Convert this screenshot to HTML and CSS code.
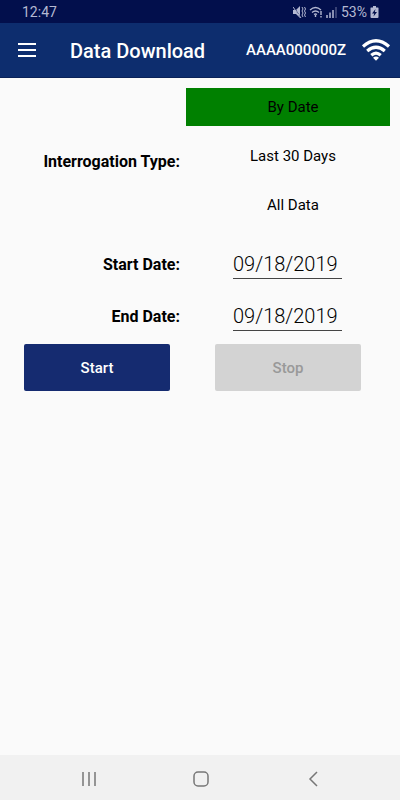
FILE: index.html
```html
<!DOCTYPE html>
<html lang="en">
<head>
    <meta charset="UTF-8">
    <meta name="viewport" content="width=device-width, initial-scale=1.0">
    <title>Data Download</title>
    <link rel="stylesheet" href="styles.css">
</head>
<body>
    <div class="status-bar">
        <span class="clock">12:47</span>
        <div class="status-icons">
            <svg width="13" height="14" viewBox="0 0 13 14">
                <path d="M0 5h3l4-4v12l-4-4H0z" fill="currentColor"/>
                <path d="M0 1l8 12" stroke="#020f4c" stroke-width="1"/>
                <path d="M0 2l8 11" stroke="currentColor" stroke-width="1"/>
                <path d="M9 2l1 2-1 2 1 2-1 2 1 2M11.500 2l1 2-1 2 1 2-1 2 1 2" fill="none" stroke="currentColor"/>
            </svg>
            <svg width="14" height="12" viewBox="0 0 14 12">
                <path d="M1 4q5.500-5 11 0M3 6.500q3.500-3 7 0M5 8.500q1.500-1 3 0" fill="none" stroke="currentColor" stroke-width="1.300"/>
                <path d="M6.500 9v2M12 5v4M12 10v1.500" stroke="currentColor" stroke-width="1.400"/>
            </svg>
            <svg width="12" height="12" viewBox="0 0 12 12">
                <path d="M1 9v3M4 6.500V12M7 4v8" stroke="currentColor" stroke-width="1.500"/>
                <path d="M10 1v11" stroke="currentColor" stroke-width="1.500" opacity=".4"/>
            </svg>
            <span class="battery-level">53%</span>
            <svg width="9" height="12" viewBox="0 0 9 12">
                <path d="M3 0h3v1.500h2q.5 0 .5.500v9q0 1-1 1h-6q-1 0-1-1V2q0-.5.500-.5h2z" fill="currentColor"/>
                <path d="M5.500 3L2 7.500h2.200L3.500 10.500 7 6H4.800z" fill="#020f4c"/>
            </svg>
        </div>
    </div>
    <header>
        <button class="menu-button" aria-label="Menu">
            <svg width="18" height="14" viewBox="0 0 18 14">
                <path d="M0 1h18M0 7h18M0 13h18" stroke="#fff" stroke-width="2"/>
            </svg>
        </button>
        <h1>Data Download</h1>
        <span class="device-id">AAAA000000Z</span>
        <svg class="wifi" width="30" height="22" viewBox="0 0 30 22">
            <path d="M2 7.500Q15-4 28 7.500M6.200 12Q15 4.500 23.800 12M10.300 16.200Q15 12 19.700 16.200" fill="none" stroke="#fff" stroke-width="3.200"/>
            <path d="M12 18.800q3-2.500 6 0L15 21.800z" fill="#fff"/>
        </svg>
    </header>
    <main>
        <div class="form-row type-row">
            <span class="label" id="type-label">Interrogation Type:</span>
            <div class="options" role="group" aria-labelledby="type-label">
                <button class="option selected" aria-pressed="true">By Date</button>
                <button class="option" aria-pressed="false">Last 30 Days</button>
                <button class="option" aria-pressed="false">All Data</button>
            </div>
        </div>
        <div class="form-row">
            <label class="label" for="start-date">Start Date:</label>
            <input class="date" type="text" id="start-date" value="09/18/2019">
        </div>
        <div class="form-row">
            <label class="label" for="end-date">End Date:</label>
            <input class="date" type="text" id="end-date" value="09/18/2019">
        </div>
        <div class="actions">
            <button class="action">Start</button>
            <button class="action" disabled>Stop</button>
        </div>
    </main>
    <nav>
        <button aria-label="Recent apps">
            <svg width="16" height="16" viewBox="0 0 16 16">
                <path d="M2 1v14M8 1v14M14 1v14" stroke="currentColor" stroke-width="1.500"/>
            </svg>
        </button>
        <button aria-label="Home">
            <svg width="16" height="16" viewBox="0 0 16 16">
                <rect x="1" y="1" width="14" height="14" rx="4" fill="none" stroke="currentColor" stroke-width="1.500"/>
            </svg>
        </button>
        <button aria-label="Back">
            <svg width="16" height="16" viewBox="0 0 16 16">
                <path d="M12 1L5 8l7 7" fill="none" stroke="currentColor" stroke-width="1.500"/>
            </svg>
        </button>
    </nav>
</body>
</html>
```

FILE: styles.css
```css
* {
    box-sizing: border-box;
}
body {
    font-family: Roboto, sans-serif;
    margin: 0;
    min-height: 100vh;
    display: flex;
    flex-direction: column;
    background-color: #fafafa;
    color: #000;
}
button {
    font-family: inherit;
    color: inherit;
    border: none;
    padding: 0;
    background: none;
    cursor: pointer;
}
svg {
    display: block;
    flex: none;
}
.status-bar {
    display: flex;
    align-items: center;
    justify-content: space-between;
    height: 23px;
    padding: 1px 21px 0 22px;
    background-color: #020f4c;
    color: #b4b9d2;
    font-size: 14px;
}
.status-icons {
    display: flex;
    align-items: center;
    gap: 3px;
}
header {
    display: flex;
    align-items: center;
    height: 55px;
    padding: 0 9px 0 18px;
    background-color: #0d2d6e;
    border-bottom: 1px solid #0a2258;
    color: #fff;
}
h1 {
    flex: 1;
    margin: 2px 0 0 34px;
    font-size: 20px;
    font-weight: 500;
}
.device-id {
    font-size: 15px;
    font-weight: 500;
}
.wifi {
    margin-left: 15px;
}
main {
    flex: 1;
    padding: 10px;
}
.form-row {
    display: grid;
    grid-template-columns: 17fr 21fr;
    align-items: center;
    height: 52px;
}
.type-row {
    height: auto;
    margin-bottom: 14px;
}
.type-row .label {
    padding-top: 10px;
}
.label {
    text-align: right;
    font-size: 16px;
    font-weight: 700;
}
.options {
    display: grid;
    gap: 11px;
    padding-left: 6px;
}
.option {
    height: 38px;
    padding: 0 0 0 10px;
    font-size: 15px;
}
.option.selected {
    background-color: #008000;
}
.date {
    justify-self: center;
    width: 109px;
    height: 30px;
    margin-left: 5px;
    padding: 0;
    border: none;
    border-bottom: 1px solid #444;
    background: none;
    font-family: inherit;
    font-size: 20px;
    font-weight: 300;
}
.actions {
    display: grid;
    grid-template-columns: 1fr 1fr;
    gap: 45px;
    padding: 2px 29px 0 14px;
}
.action {
    height: 47px;
    border-radius: 2px;
    background-color: #152b70;
    color: #fff;
    font-size: 15px;
    font-weight: 500;
}
.action:disabled {
    background-color: #d3d3d3;
    color: #999;
    cursor: default;
}
nav {
    display: flex;
    justify-content: center;
    align-items: center;
    gap: 96px;
    height: 45px;
    padding: 2px 0 0 2px;
    background-color: #f1f1f1;
    color: #777;
}
```
